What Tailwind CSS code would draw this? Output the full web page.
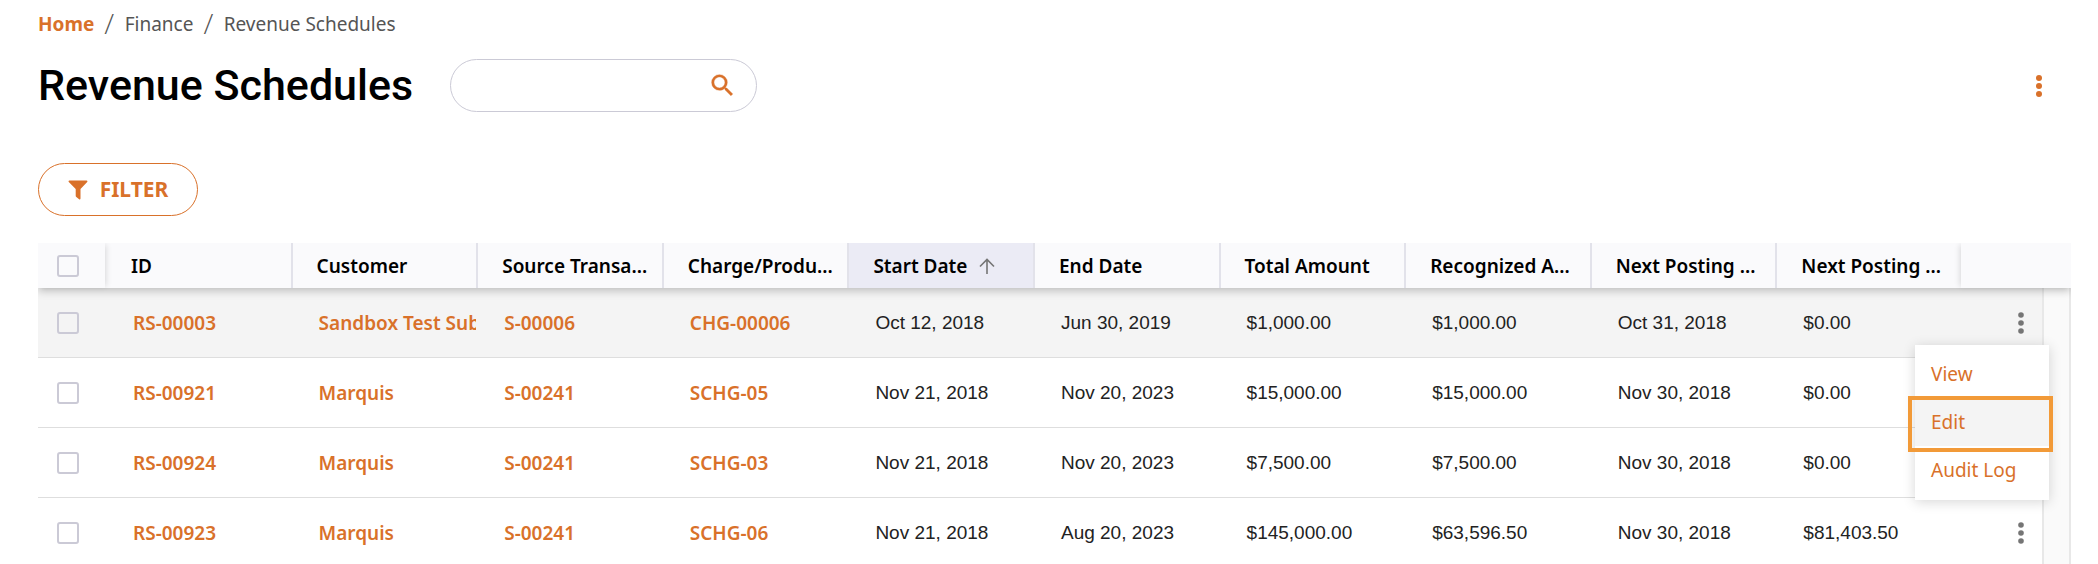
<!DOCTYPE html>
<html lang="en">
<head>
    <meta charset="UTF-8">
    <title>Revenue Schedules</title>
    <meta name="viewport" content="width=device-width, initial-scale=1.0">
    <script src="https://cdn.jsdelivr.net/npm/@tailwindcss/browser@4"></script>
</head>
<body class="bg-white overflow-hidden font-['Noto_Sans',sans-serif]">
    <div class="pl-[38px] pr-[27px]">
        <nav aria-label="Breadcrumb" class="flex items-center gap-2.5 pt-3 text-[19px] leading-6 text-[#555]">
            <a href="#" class="font-bold text-[#d9712a]">Home</a>
            <span class="font-['Roboto',sans-serif] font-light text-[26px]">/</span>
            <a href="#">Finance</a>
            <span class="font-['Roboto',sans-serif] font-light text-[26px]">/</span>
            <span>Revenue Schedules</span>
        </nav>

        <header class="flex items-center mt-[23px]">
            <h1 class="font-['Roboto',sans-serif] font-medium text-[43px] leading-[53px] text-black">Revenue Schedules</h1>
            <form class="relative ml-[37px]">
                <input type="text" aria-label="Search" class="block w-[307px] h-[53px] rounded-full border border-[#cbcad6] pl-6 pr-14 text-[19px] outline-none">
                <button type="button" aria-label="Search" class="absolute right-5 top-3">
                    <svg class="w-[29px] h-[29px]" viewBox="0 0 24 24" fill="#d9712a" stroke="#d9712a" stroke-width="0.3"><path d="M15.5 14h-.79l-.28-.27A6.471 6.471 0 0 0 16 9.5 6.5 6.5 0 1 0 9.5 16c1.61 0 3.09-.59 4.23-1.57l.27.28v.79l5 4.99L20.49 19l-4.99-5zm-6 0C7.01 14 5 11.99 5 9.5S7.01 5 9.5 5 14 7.01 14 9.5 11.99 14 9.5 14z"/></svg>
                </button>
            </form>
            <button type="button" aria-label="Page actions" class="ml-auto mr-[29px]">
                <svg class="block w-[6px] h-[22px]" viewBox="0 0 6 22" fill="#d9712a"><circle cx="3" cy="3" r="3"/><circle cx="3" cy="11" r="3"/><circle cx="3" cy="19" r="3"/></svg>
            </button>
        </header>

        <button type="button" class="flex items-center justify-center gap-3 mt-[51px] w-[160px] h-[53px] rounded-full border border-[#d9712a] text-[21px] font-bold text-[#d9712a]">
            <svg class="w-5 h-5" viewBox="0 0 20 20" fill="#d9712a"><path d="M1.4.5h17.200c.8 0 1.100.9.6 1.400L12.500 9v9.500c0 .8-.8 1.100-1.400.7l-2.800-2.300a1.500 1.500 0 0 1-.6-1.200V9L.8 1.900C.3 1.400.6.5 1.400.5z"/></svg>
            FILTER
        </button>

        <div class="relative mt-[27px]">
            <table class="w-full table-fixed border-separate border-spacing-0 text-left">
                <colgroup>
                    <col class="w-[67px]">
                    <col><col><col><col><col><col><col><col><col><col>
                    <col class="w-[81px]">
                    <col class="w-[29px]">
                </colgroup>
                <thead class="relative z-10 text-[19px] leading-6 text-black shadow-[0_3px_8px_rgba(0,0,0,0.22)] [clip-path:inset(0_0_-20px_0)]">
                    <tr class="h-[45px] bg-[#fafafc] *:font-semibold *:whitespace-nowrap">
                        <th class="pl-[19px] shadow-[3px_0_6px_-2px_rgba(0,0,0,0.14)]"><input type="checkbox" aria-label="Select all" class="block appearance-none size-[22px] rounded-[3px] border-2 border-[#cbcad6]"></th>
                        <th class="pl-[26px]">ID</th>
                        <th class="pl-6 border-l-2 border-[#e2e2ea]">Customer</th>
                        <th class="pl-6 border-l-2 border-[#e2e2ea]">Source Transa...</th>
                        <th class="pl-6 border-l-2 border-[#e2e2ea]">Charge/Produ...</th>
                        <th aria-sort="ascending" class="pl-6 border-l-2 border-[#e2e2ea] bg-[#ebebf5]">
                            <span class="flex items-center gap-3">Start Date
                                <svg class="w-4 h-4" viewBox="0 0 16 16" fill="none" stroke="#757575" stroke-width="1.600"><path d="M8 16V1.500M1 8.500l7-7 7 7"/></svg>
                            </span>
                        </th>
                        <th class="pl-6 border-l-2 border-[#e2e2ea]">End Date</th>
                        <th class="pl-6 border-l-2 border-[#e2e2ea]">Total Amount</th>
                        <th class="pl-6 border-l-2 border-[#e2e2ea]">Recognized A...</th>
                        <th class="pl-6 border-l-2 border-[#e2e2ea]">Next Posting ...</th>
                        <th class="pl-6 border-l-2 border-[#e2e2ea]">Next Posting ...</th>
                        <th colspan="2" class="shadow-[-3px_0_6px_-2px_rgba(0,0,0,0.14)]"></th>
                    </tr>
                </thead>
                <tbody id="rows" class="font-['Liberation_Sans',Arial,sans-serif] text-[19px] leading-6 text-[#222]"></tbody>
            </table>

            <!-- row action menu -->
            <div class="absolute z-20 right-[22px] top-[102px] w-[134px] h-[155px] pt-[5px] bg-white shadow-[0_2px_12px_rgba(0,0,0,0.16)] text-[19px] leading-12 text-[#d9712a]">
                <a href="#" class="block h-12 pl-4">View</a>
                <a href="#" class="relative block h-12 pl-4 bg-[#f4f4f4]">Edit
                    <span class="absolute -left-[7px] -right-1 -top-0.5 -bottom-1.5 border-4 border-[#f29a38]"></span>
                </a>
                <a href="#" class="block h-12 pl-4">Audit Log</a>
            </div>
        </div>
    </div>

    <script>
        const data = [
            ['RS-00003', 'Sandbox Test Sub', 'S-00006', 'CHG-00006', 'Oct 12, 2018', 'Jun 30, 2019', '$1,000.00', '$1,000.00', 'Oct 31, 2018', '$0.00'],
            ['RS-00921', 'Marquis', 'S-00241', 'SCHG-05', 'Nov 21, 2018', 'Nov 20, 2023', '$15,000.00', '$15,000.00', 'Nov 30, 2018', '$0.00'],
            ['RS-00924', 'Marquis', 'S-00241', 'SCHG-03', 'Nov 21, 2018', 'Nov 20, 2023', '$7,500.00', '$7,500.00', 'Nov 30, 2018', '$0.00'],
            ['RS-00923', 'Marquis', 'S-00241', 'SCHG-06', 'Nov 21, 2018', 'Aug 20, 2023', '$145,000.00', '$63,596.50', 'Nov 30, 2018', '$81,403.50']
        ];

        document.getElementById('rows').innerHTML = data.map((row, i) => {
            const cells = row.map((text, c) => c < 4
                ? `<td class="pl-7 border-b border-[#dedede]"><a href="#" class="block overflow-hidden whitespace-nowrap font-['Noto_Sans',sans-serif] font-semibold text-[#d9712a]">${text}</a></td>`
                : `<td class="pl-7 border-b border-[#dedede] whitespace-nowrap">${text}</td>`).join('');
            return `<tr class="h-[70px] ${i === 0 ? 'bg-[#f4f4f4]' : 'bg-white'}">
                <td class="pl-[19px] border-b border-[#dedede]"><input type="checkbox" aria-label="Select ${row[0]}" class="block appearance-none size-[22px] rounded-[3px] border-2 border-[#cbcad6]"></td>
                ${cells}
                <td class="pr-[18px] border-b border-[#dedede]">
                    <button type="button" aria-label="Actions for ${row[0]}" class="block ml-auto">
                        <svg class="block w-[6px] h-[22px]" viewBox="0 0 6 22" fill="#757575"><circle cx="3" cy="3" r="2.800"/><circle cx="3" cy="11" r="2.800"/><circle cx="3" cy="19" r="2.800"/></svg>
                    </button>
                </td>
                <td class="bg-[#fafafa] border-x-2 border-[#e8e8e8]"></td>
            </tr>`;
        }).join('');
    </script>
</body>
</html>
